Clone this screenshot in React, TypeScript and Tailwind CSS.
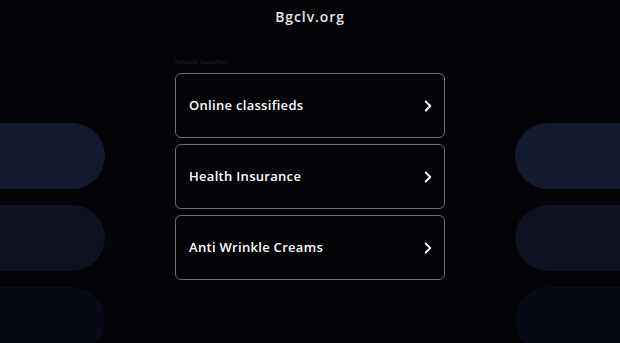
import { ChevronRight } from "lucide-react";

const links = ["Online classifieds", "Health Insurance", "Anti Wrinkle Creams"];

const pillColors = ["bg-[#141a2e]", "bg-[#0d1120]", "bg-[#070a14]"];

const SidePills = ({ side }: { side: "left" | "right" }) => (
  <div className="w-[105px] shrink-0 pt-[123px] flex flex-col gap-[16px]">
    {pillColors.map((c) => (
      <div
        key={c}
        className={`h-[66px] shrink-0 ${c} ${side === "left" ? "rounded-r-[33px]" : "rounded-l-[33px]"}`}
      />
    ))}
  </div>
);

export default function App() {
  return (
    <div className="h-[343px] w-full overflow-hidden bg-[#030307] flex" style={{ fontFamily: '"DejaVu Sans", sans-serif' }}>
      <SidePills side="left" />
      <main className="flex-1 flex flex-col items-center">
        <h1 className="mt-[8px] text-[14px] leading-[18px] font-semibold text-[#e5e5e8] tracking-[0.9px]" style={{ fontFamily: '"Open Sans", sans-serif' }}>
          Bgclv.org
        </h1>
        <div className="w-[270px] mt-[32px]">
          <p className="text-[6px] leading-[8px] text-[#1c2033] mb-[7px]">Related Searches</p>
          <div className="flex flex-col gap-[6px]">
            {links.map((l) => (
              <a
                key={l}
                href="#"
                className="h-[65px] rounded-[6px] border border-[#6f6f73] bg-[#030307] flex items-center justify-between pl-[13px] pr-[7px]"
              >
                <span className="text-[13px] font-semibold text-white tracking-[0.3px]" style={{ fontFamily: '"Open Sans", sans-serif' }}>
                  {l}
                </span>
                <ChevronRight className="w-[18px] h-[18px] text-white" strokeWidth={2.5} />
              </a>
            ))}
          </div>
        </div>
      </main>
      <SidePills side="right" />
    </div>
  );
}
